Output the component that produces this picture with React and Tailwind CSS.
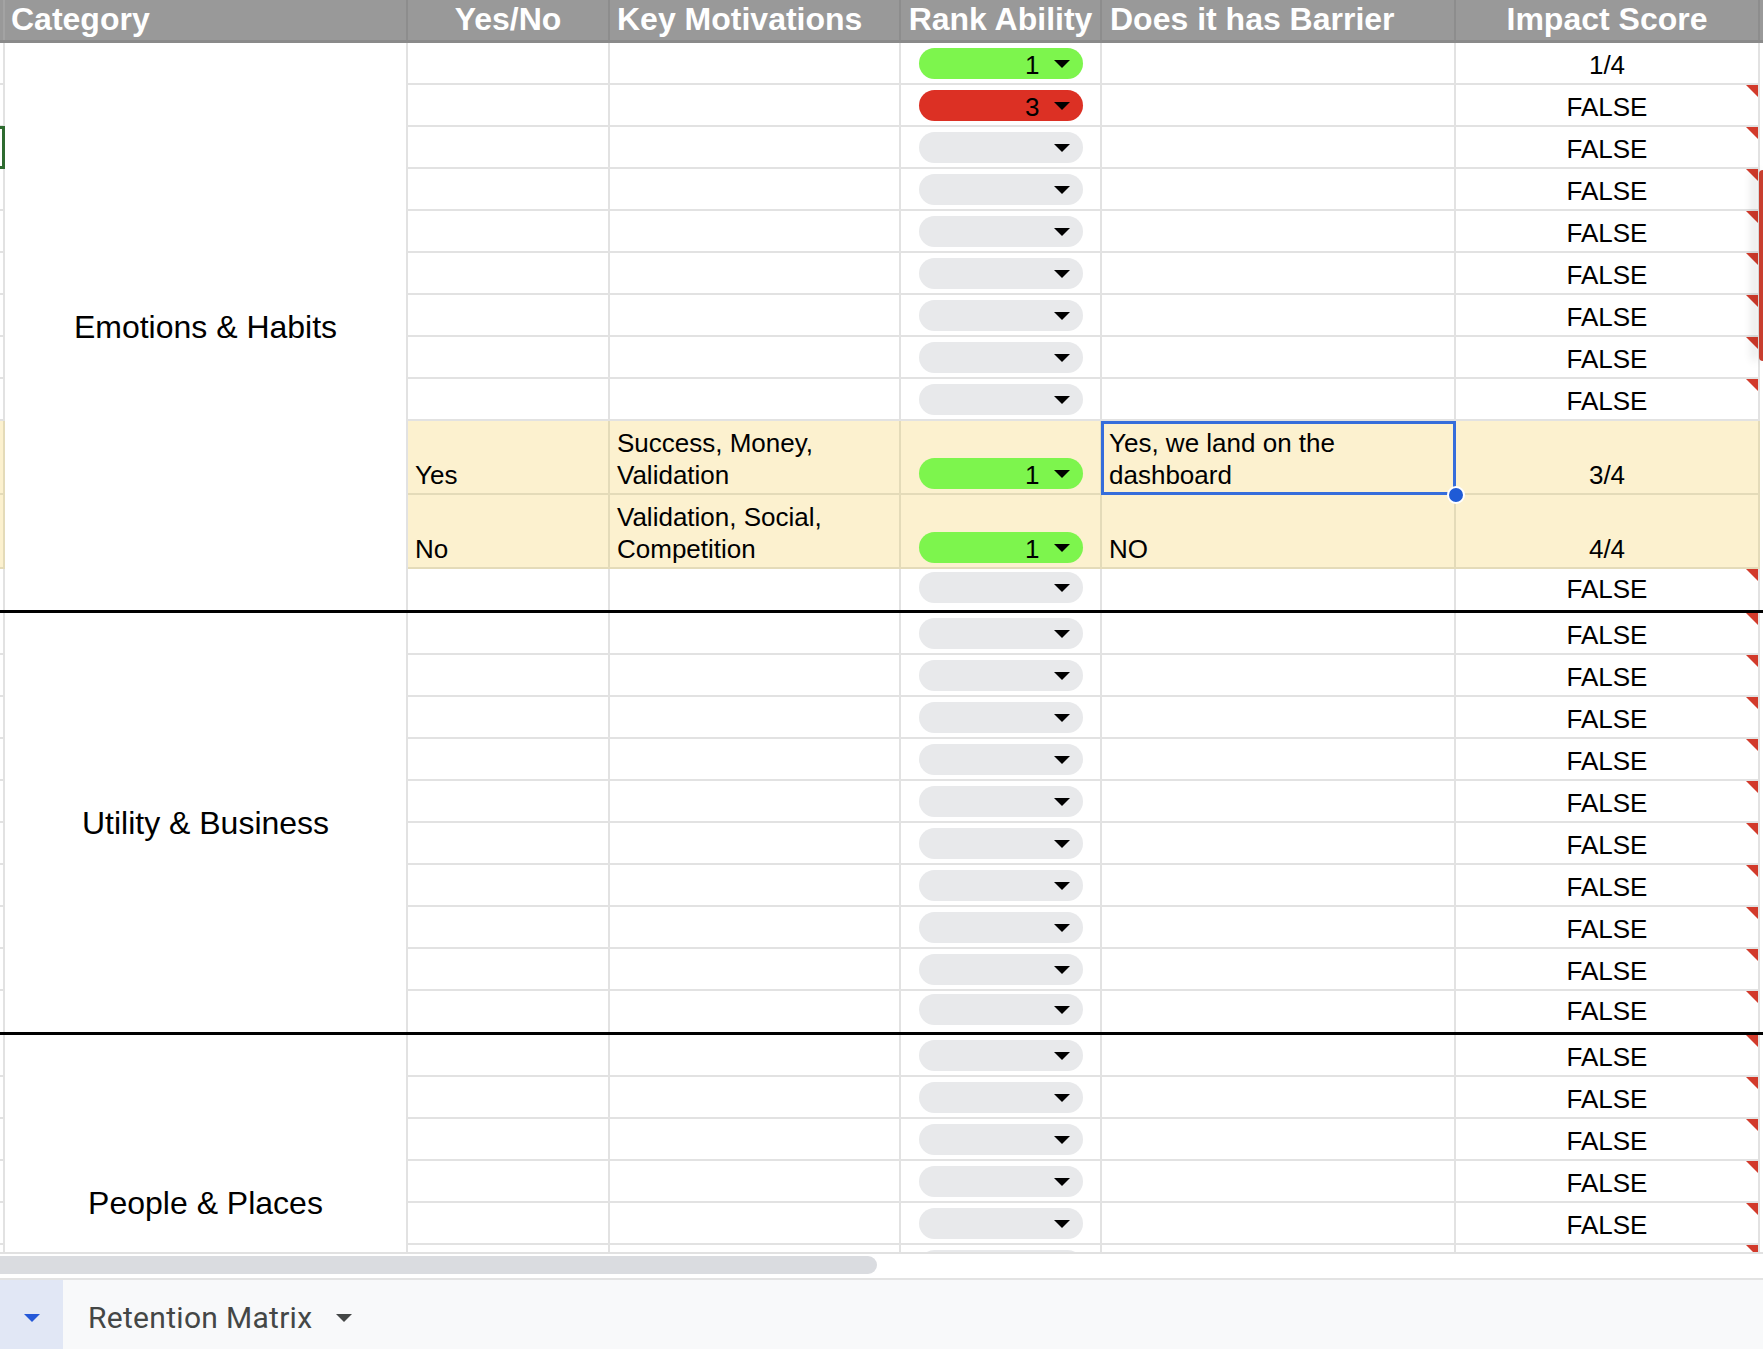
import React from 'react';

const F = 'FALSE';
const green = { v: 1, c: 'green' };

const emotions = [
  { impact: '1/4', rank: green },
  { impact: F, rank: { v: 3, c: 'red' }, tri: true },
  ...Array.from({ length: 7 }, () => ({ impact: F, tri: true })),
  {
    yellow: true,
    yesno: 'Yes',
    key: 'Success, Money, Validation',
    rank: green,
    barrier: 'Yes, we land on the dashboard',
    impact: '3/4',
    selected: true,
  },
  { yellow: true, yesno: 'No', key: 'Validation, Social, Competition', rank: green, barrier: 'NO', impact: '4/4' },
  { impact: F, tri: true },
];

const utility = Array.from({ length: 10 }, () => ({ impact: F, tri: true }));
// last row only peeks in above the scroll bar
const people = [...Array.from({ length: 5 }, () => ({ impact: F, tri: true })), { impact: '', tri: true }];

const sections = [
  { label: 'Emotions & Habits', rows: emotions },
  { label: 'Utility & Business', rows: utility },
  { label: 'People & Places', rows: people, open: true },
];

function Arrow({ className }) {
  return (
    <svg width="16" height="8" viewBox="0 0 16 8" className={className}>
      <path d="M0 0h16L8 8z" fill="currentColor" />
    </svg>
  );
}

function Chip({ rank }) {
  const bg = rank?.c === 'green' ? 'bg-[#7df54d]' : rank?.c === 'red' ? 'bg-[#dc3024]' : 'bg-[#e8e9eb]';
  return (
    <div className={`w-[164px] h-[31px] rounded-full ${bg} flex items-center justify-end pr-[13px]`}>
      {rank && <span className="text-[26px] leading-none mr-[14px] mt-[3px] text-black">{rank.v}</span>}
      <Arrow className="text-black" />
    </div>
  );
}

const rowHeight = (r, last) => (last ? 'h-[41px]' : r.yellow ? 'h-[74px] border-b-2' : 'h-[42px] border-b-2');

function Row({ r, last }) {
  const tone = r.yellow ? 'bg-[#fcf1cf] border-[#e4dbb9]' : 'bg-white border-[#e2e2e2]';
  const h = rowHeight(r, last);
  const text = 'text-[26px] leading-[32px] text-black';
  const pb = last ? 'pb-[5px]' : 'pb-[2px]';

  return (
    <div className={`flex ${h} ${tone}`}>
      <div className={`w-[202px] border-r-2 ${tone} flex items-end px-[7px] ${pb} ${text}`}>{r.yesno}</div>
      <div className={`w-[291px] border-r-2 ${tone} flex items-end px-[7px] ${pb} ${text}`}>{r.key}</div>
      <div className={`w-[201px] border-r-2 ${tone} flex items-end justify-center ${last ? 'pb-[7px]' : 'pb-[4px]'}`}>
        <Chip rank={r.rank} />
      </div>
      <div className={`w-[354px] border-r-2 ${tone} relative flex items-end px-[7px] ${pb} ${text}`}>
        {r.barrier}
        {r.selected && (
          <>
            <div className="absolute -left-px top-0 -right-[2px] -bottom-[2px] border-[3px] border-[#356ddb]" />
            <div className="absolute left-[345px] top-[65px] w-[18px] h-[18px] rounded-full bg-[#1f5bd6] border-2 border-white z-10" />
          </>
        )}
      </div>
      <div className={`w-[304px] border-r-2 ${tone} relative flex items-end justify-center ${pb} ${text}`}>
        {r.impact}
        {r.tri && (
          <div className="absolute top-0 right-0 w-0 h-0 border-t-[12px] border-l-[12px] border-t-[#d23a2b] border-l-transparent" />
        )}
      </div>
    </div>
  );
}

function Section({ s }) {
  return (
    <>
      <div className={`flex items-start ${s.open ? 'h-[336px]' : ''}`}>
        <div className="w-[5px] flex flex-col">
          {s.rows.map((r, i) => (
            <div
              key={i}
              className={`w-[5px] border-r-2 ${rowHeight(r, !s.open && i === s.rows.length - 1)} ${
                r.yellow ? 'bg-[#fcf1cf] border-[#e4dbb9]' : 'bg-white border-[#e2e2e2]'
              }`}
            />
          ))}
        </div>
        <div className="w-[403px] self-stretch border-r-2 border-[#e2e2e2] flex items-center justify-center text-[32px] text-black">
          {s.label}
        </div>
        <div className="flex flex-col">
          {s.rows.map((r, i) => (
            <Row key={i} r={r} last={!s.open && i === s.rows.length - 1} />
          ))}
        </div>
        <div className="w-[3px]" />
      </div>
      {!s.open && <div className="h-[3px] bg-black" />}
    </>
  );
}

export default function App() {
  const head = 'border-r-2 border-[#8d8d8d] flex items-center pb-[2px] whitespace-nowrap';
  return (
    <div className="relative w-[1763px] h-[1349px] overflow-hidden bg-white font-['Liberation_Sans',Arial,sans-serif]">
      <div className="h-[1252px] overflow-hidden">
        <div className="flex h-[43px] bg-[#999999] border-b-[3px] border-[#8a8a8a] text-white font-bold text-[32px] leading-none">
          <div className="w-[5px] border-r-2 border-[#a3a3a3]" />
          <div className={`w-[403px] ${head} pl-[6px]`}>Category</div>
          <div className={`w-[202px] ${head} justify-center`}>Yes/No</div>
          <div className={`w-[291px] ${head} pl-[7px]`}>Key Motivations</div>
          <div className={`w-[201px] ${head} justify-center`}>Rank Ability</div>
          <div className={`w-[354px] ${head} pl-[8px]`}>Does it has Barrier</div>
          <div className={`w-[304px] ${head} justify-center`}>Impact Score</div>
          <div className="w-[3px]" />
        </div>
        {sections.map((s) => (
          <Section key={s.label} s={s} />
        ))}
      </div>

      <div className="h-[2px] bg-[#e1e1e1]" />
      <div className="h-[24px] pt-[2px]">
        <div className="w-[877px] h-[18px] rounded-r-full bg-[#dadce0]" />
      </div>
      <div className="h-[2px] bg-[#e3e3e3]" />
      <div className="h-[69px] bg-[#f8f9fa] flex items-stretch">
        <div className="w-[63px] bg-[#e1e7f5] flex items-center justify-center pt-[7px]">
          <Arrow className="text-[#2458d8]" />
        </div>
        <div className="flex items-center pl-[25px] pt-[6px] font-['Roboto',sans-serif] text-[30px] tracking-[0.3px] text-[#444746]">
          Retention Matrix
          <Arrow className="ml-[24px] mt-[1px] text-[#444746]" />
        </div>
      </div>

      {/* green selection edge from the off-screen column */}
      <div className="absolute left-[-3px] top-[126px] w-[8px] h-[43px] border-[3px] border-[#2e6b30]" />
      {/* error tooltip edge at right */}
      <div className="absolute right-0 top-[170px] w-[4px] h-[191px] rounded-l-[5px] bg-[#c83e2e] shadow-[-6px_0_10px_rgba(0,0,0,0.18)]" />
    </div>
  );
}
